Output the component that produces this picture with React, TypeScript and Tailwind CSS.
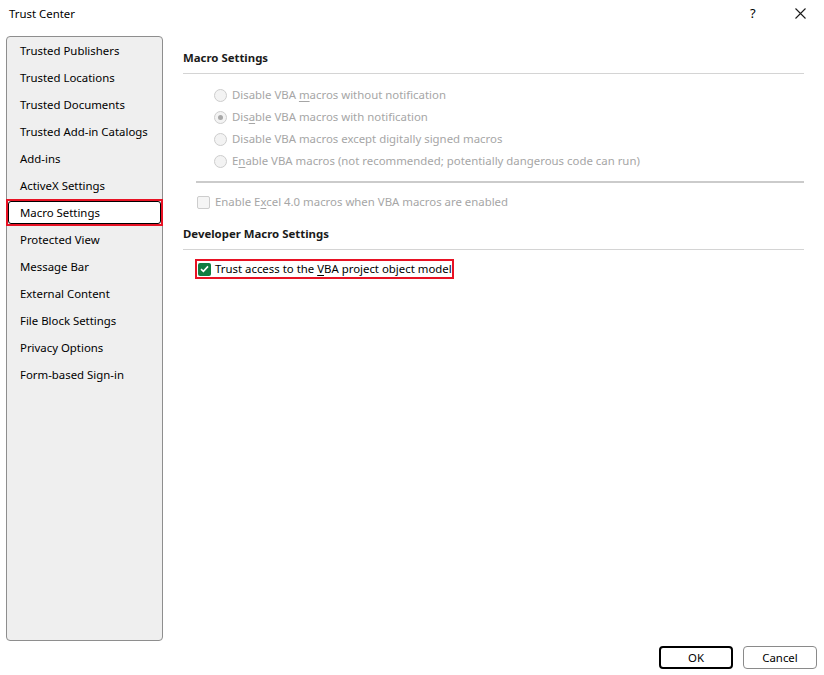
import React from 'react';

const navItems = [
  'Trusted Publishers',
  'Trusted Locations',
  'Trusted Documents',
  'Trusted Add-in Catalogs',
  'Add-ins',
  'ActiveX Settings',
  'Macro Settings',
  'Protected View',
  'Message Bar',
  'External Content',
  'File Block Settings',
  'Privacy Options',
  'Form-based Sign-in',
];

function Radio({ checked }: { checked?: boolean }) {
  return (
    <span className="w-[13px] h-[13px] rounded-full border border-[#cdcdcd] bg-[#f3f3f3] flex items-center justify-center shrink-0">
      {checked && <span className="w-[5px] h-[5px] rounded-full bg-[#a8a8a8]" />}
    </span>
  );
}

function U({ children }: { children: React.ReactNode }) {
  return <span className="underline underline-offset-2">{children}</span>;
}

export default function App() {
  const selected = 'Macro Settings';
  return (
    <div className="w-[824px] h-[675px] bg-white flex flex-col text-[11.4px] text-black font-['Noto_Sans','Open_Sans',sans-serif] whitespace-nowrap overflow-hidden">
      <div className="h-[27px] flex items-center pl-[9px]">
        <span className="flex-1">Trust Center</span>
        <span className="w-[12px] text-[13px] mr-[33px]">?</span>
        <svg width="11" height="11" viewBox="0 0 11 11" className="mr-[18px]">
          <path d="M0.5 0.5 L10.5 10.5 M10.5 0.5 L0.5 10.5" stroke="#1a1a1a" strokeWidth="1.1" />
        </svg>
      </div>

      <div className="flex pt-[9px] pl-[6px]">
        <div className="w-[157px] h-[605px] border border-[#8e8e8e] rounded-[4px] bg-[#efefef] flex flex-col">
          {navItems.map((item) =>
            item === selected ? (
              <div key={item} className="h-[27px] border-2 border-[#e81224] -mx-px">
                <div className="h-full border border-black rounded-[3px] bg-white flex items-center pl-[11px]">
                  {item}
                </div>
              </div>
            ) : (
              <div key={item} className="h-[27px] flex items-center pl-[13px]">
                {item}
              </div>
            )
          )}
        </div>

        <div className="flex-1 ml-[20px] mr-[20px] pt-[12px] flex flex-col">
          <div className="h-[20px] flex items-center font-bold text-[#1a1a1a]">Macro Settings</div>
          <div className="mt-[5px] h-px bg-[#d4d4d4]" />
          <div className="mt-[10px] flex flex-col pl-[31px] text-[#a6a6a6]">
            <div className="h-[22px] flex items-center gap-[5px]">
              <Radio />
              <span>Disable VBA <U>m</U>acros without notification</span>
            </div>
            <div className="h-[22px] flex items-center gap-[5px]">
              <Radio checked />
              <span>Dis<U>a</U>ble VBA macros with notification</span>
            </div>
            <div className="h-[22px] flex items-center gap-[5px]">
              <Radio />
              <span>Disable VBA macros except digitally signed macros</span>
            </div>
            <div className="h-[22px] flex items-center gap-[5px]">
              <Radio />
              <span>E<U>n</U>able VBA macros (not recommended; potentially dangerous code can run)</span>
            </div>
          </div>
          <div className="mt-[9px] ml-[13px] h-[2px] bg-[#cbcbcb]" />
          <div className="mt-[9px] h-[20px] flex items-center gap-[5px] pl-[14px] text-[#a6a6a6]">
            <span className="w-[13px] h-[13px] rounded-[2px] border border-[#cdcdcd] bg-[#f5f5f5] shrink-0" />
            <span>Enable E<U>x</U>cel 4.0 macros when VBA macros are enabled</span>
          </div>
          <div className="mt-[12px] h-[20px] flex items-center font-bold text-[#1a1a1a]">Developer Macro Settings</div>
          <div className="mt-[5px] h-px bg-[#d4d4d4]" />
          <div className="mt-[9px] ml-[12px] w-[259px] h-[20px] border-2 border-[#e81224] flex items-center gap-[4px] pl-[1px]">
            <span className="w-[13px] h-[13px] rounded-[2px] bg-[#107c41] flex items-center justify-center shrink-0">
              <svg width="9" height="8" viewBox="0 0 9 8">
                <path d="M1 4.2 L3.4 6.4 L8 1.4" stroke="white" strokeWidth="1.6" fill="none" />
              </svg>
            </span>
            <span>Trust access to the <U>V</U>BA project object model</span>
          </div>
        </div>
      </div>

      <div className="mt-[5px] flex justify-end gap-[10px] pr-[7px]">
        <button className="w-[74px] h-[23px] border-2 border-black rounded-[4px] bg-white flex items-center justify-center">
          OK
        </button>
        <button className="w-[74px] h-[23px] border border-[#8a8a8a] rounded-[4px] bg-white flex items-center justify-center">
          Cancel
        </button>
      </div>
    </div>
  );
}
